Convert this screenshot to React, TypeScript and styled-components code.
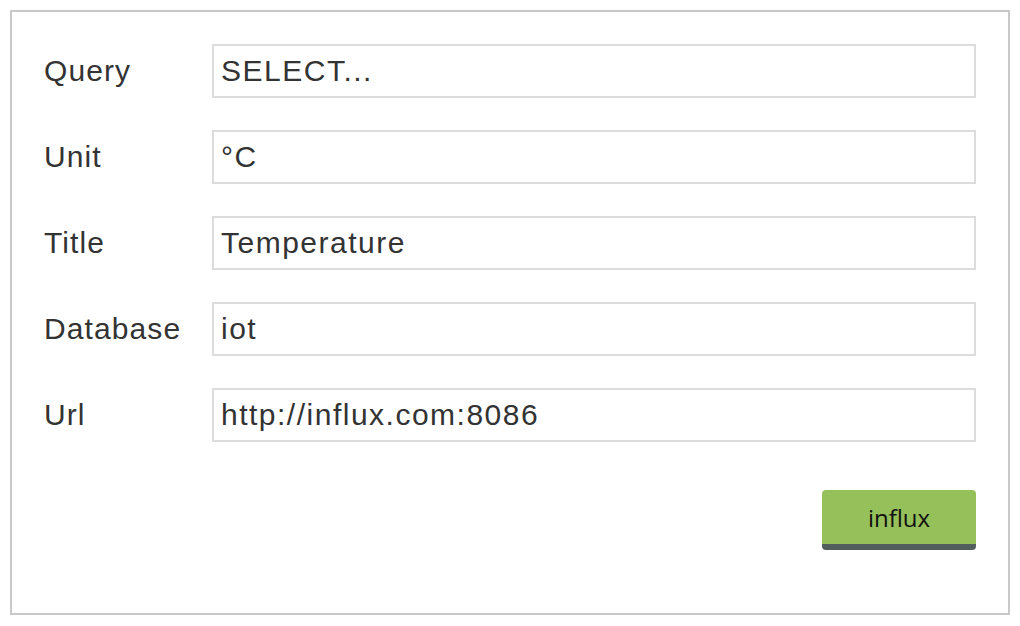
import React from "react";
import styled, { createGlobalStyle } from "styled-components";

const Global = createGlobalStyle`
  html, body { margin: 0; padding: 0; background: #fff; }
  body { font-family: "Liberation Sans", Arial, sans-serif; color: #333; }
`;

const Panel = styled.div`
  margin: 10px;
  width: 1000px;
  height: 605px;
  box-sizing: border-box;
  border: 2px solid #c8c8c8;
  padding: 32px 32px 0 32px;
  display: flex;
  flex-direction: column;
`;

const Fields = styled.div`
  display: flex;
  flex-direction: column;
  gap: 32px;
`;

const Row = styled.div`
  display: flex;
  align-items: center;
  height: 54px;
`;

const Label = styled.label`
  width: 168px;
  flex: none;
  font-size: 30px;
  letter-spacing: 1.1px;
  color: #333;
`;

const Input = styled.input`
  flex: 1;
  height: 54px;
  box-sizing: border-box;
  border: 2px solid #dcdcdc;
  padding: 0 7px;
  font-family: "Liberation Sans", Arial, sans-serif;
  font-size: 30px;
  letter-spacing: 1.5px;
  color: #333;
  outline: none;
  background: #fff;
`;

const Actions = styled.div`
  display: flex;
  justify-content: flex-end;
  margin-top: 48px;
`;

const Button = styled.button`
  width: 154px;
  height: 60px;
  box-sizing: border-box;
  background: #96c05a;
  border: none;
  border-bottom: 6px solid #525d5e;
  border-radius: 4px;
  font-family: "Open Sans", sans-serif;
  font-size: 24px;
  color: #111;
  padding: 0;
  cursor: pointer;
`;

const fields = [
  { label: "Query", value: "SELECT..." },
  { label: "Unit", value: "°C" },
  { label: "Title", value: "Temperature" },
  { label: "Database", value: "iot" },
  { label: "Url", value: "http://influx.com:8086" },
];

export default function App() {
  return (
    <>
      <Global />
      <Panel>
        <Fields>
          {fields.map((f) => (
            <Row key={f.label}>
              <Label>{f.label}</Label>
              <Input defaultValue={f.value} />
            </Row>
          ))}
        </Fields>
        <Actions>
          <Button>influx</Button>
        </Actions>
      </Panel>
    </>
  );
}
